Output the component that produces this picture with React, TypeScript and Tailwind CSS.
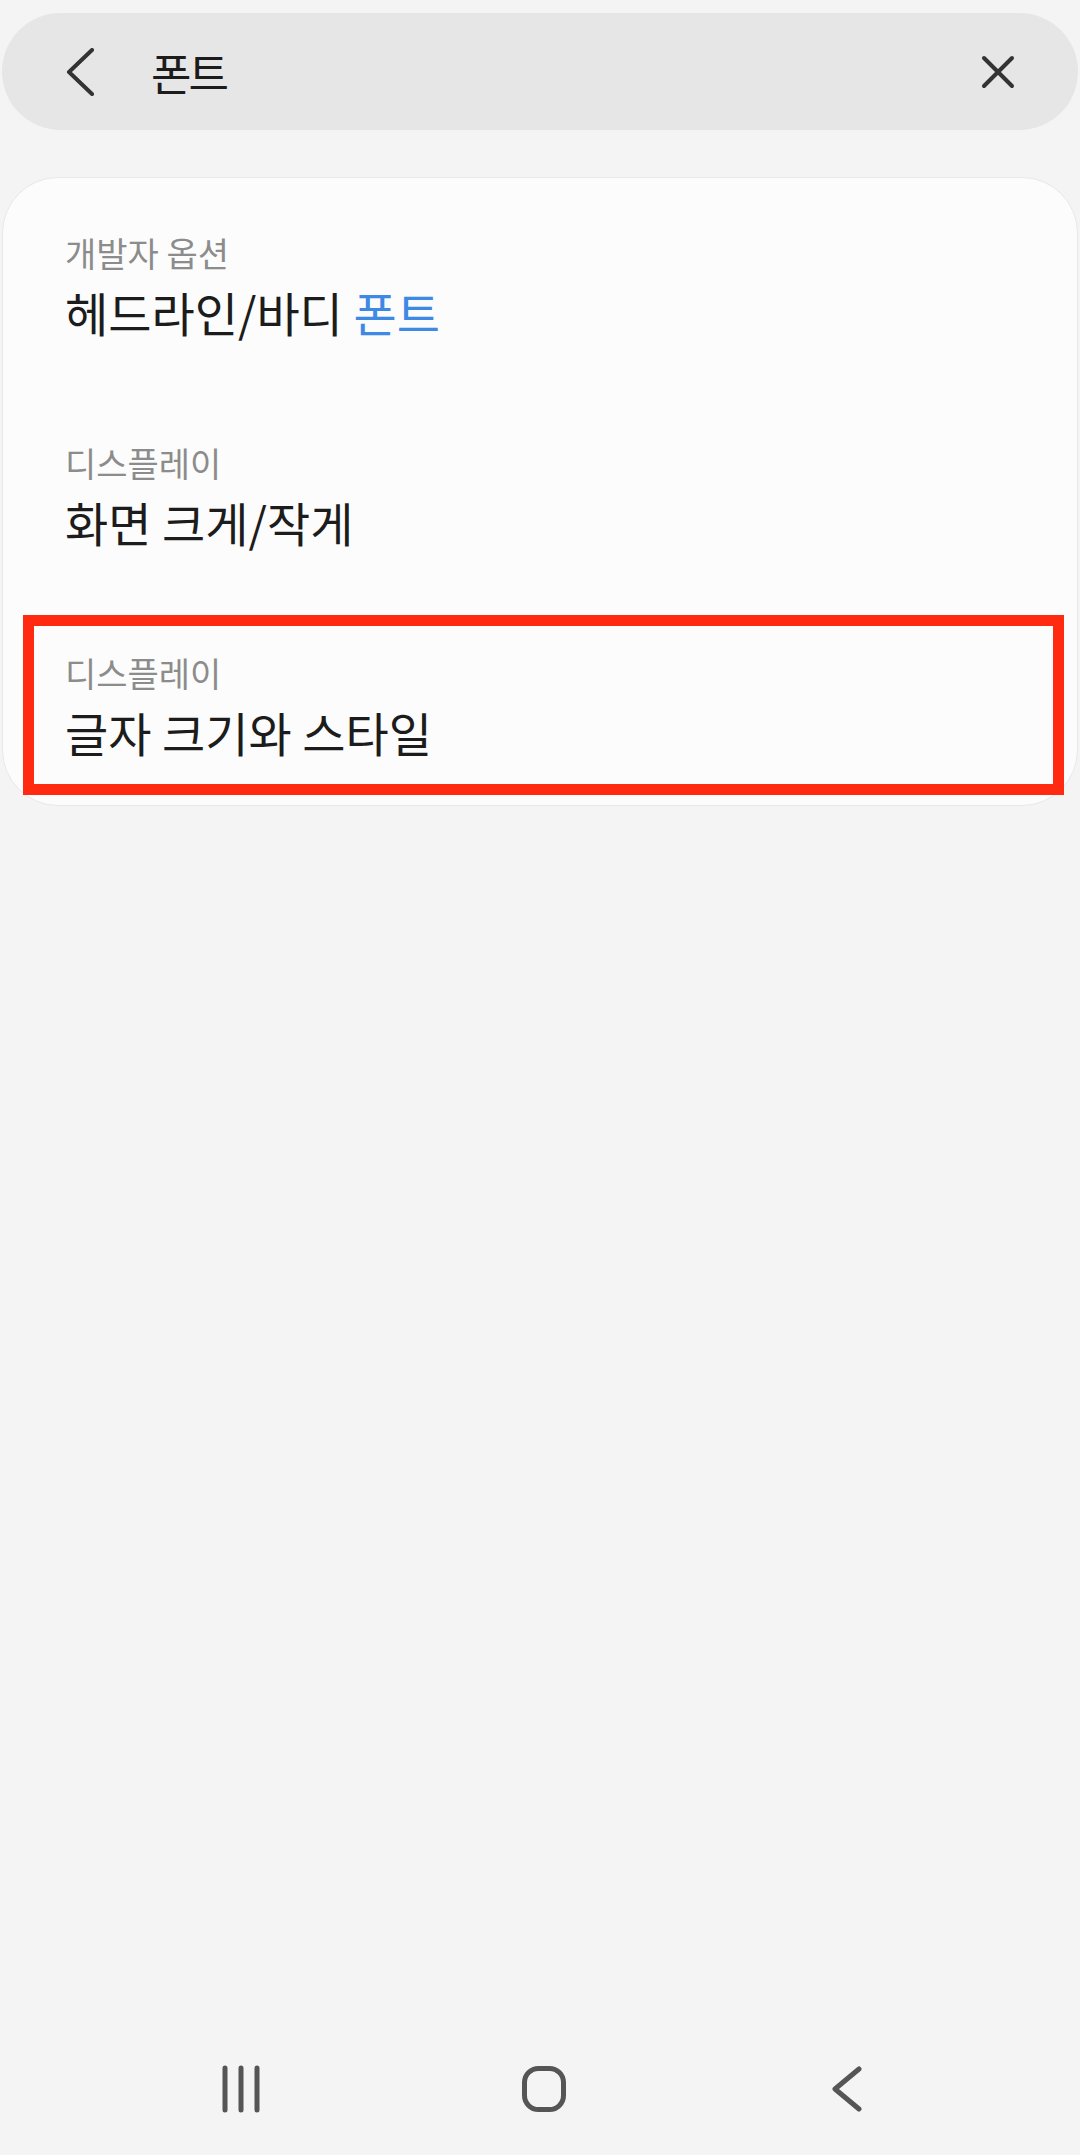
import React from "react";

const font = { fontFamily: '"Noto Sans CJK KR", "Noto Sans", sans-serif' };

function Item({ sub, children }: { sub: string; children: React.ReactNode }) {
  return (
    <div className="flex flex-col gap-[11px] pl-[62px]">
      <div className="text-[34px] leading-[40px] tracking-[0px] text-[#8c8c8c]">{sub}</div>
      <div className="text-[47px] leading-[56px] tracking-[0px] text-[#1c1c1c]">{children}</div>
    </div>
  );
}

export default function App() {
  return (
    <div className="relative w-[1080px] min-h-[2155px] bg-[#f4f4f4] flex flex-col" style={font}>
      {/* Header pill */}
      <div className="pt-[13px] px-[2px]">
        <div className="h-[117px] rounded-full bg-[#e6e6e6] flex items-center pl-[63px] pr-[63px]">
          <svg width="30" height="48" viewBox="0 0 30 48" fill="none" className="shrink-0">
            <polyline points="27,2 4,24 27,46" stroke="#333" strokeWidth="4" strokeLinecap="round" strokeLinejoin="round" />
          </svg>
          <div className="ml-[56px] text-[44px] leading-[56px] tracking-[-3px] text-[#1c1c1c]">폰트</div>
          <div className="flex-1" />
          <svg width="34" height="34" viewBox="0 0 34 34" fill="none" className="shrink-0">
            <line x1="3" y1="3" x2="31" y2="31" stroke="#333" strokeWidth="4" strokeLinecap="round" />
            <line x1="31" y1="3" x2="3" y2="31" stroke="#333" strokeWidth="4" strokeLinecap="round" />
          </svg>
        </div>
      </div>

      {/* Card */}
      <div className="mt-[47px] mx-[2px] rounded-[56px] bg-[#fcfcfc] border border-[#e8e8e8] pt-[55px] pb-[45px] flex flex-col gap-[103px]">
        <Item sub="개발자 옵션">
          헤드라인/바디 <span className="text-[#3d89e4]">폰트</span>
        </Item>
        <Item sub="디스플레이">화면 크게/작게</Item>
        <Item sub="디스플레이">글자 크기와 스타일</Item>
      </div>

      <div className="flex-1" />

      {/* Navigation bar */}
      <div className="h-[132px] flex items-center justify-center gap-[183px] pl-[8px]">
        <div className="w-[120px] flex justify-center">
          <svg width="40" height="48" viewBox="0 0 40 48" fill="none">
            <line x1="4" y1="3" x2="4" y2="45" stroke="#555" strokeWidth="5" strokeLinecap="round" />
            <line x1="20" y1="3" x2="20" y2="45" stroke="#555" strokeWidth="5" strokeLinecap="round" />
            <line x1="36" y1="3" x2="36" y2="45" stroke="#555" strokeWidth="5" strokeLinecap="round" />
          </svg>
        </div>
        <div className="w-[120px] flex justify-center">
          <svg width="44" height="46" viewBox="0 0 44 46" fill="none">
            <rect x="2.5" y="2.5" width="39" height="41" rx="14" stroke="#555" strokeWidth="5" />
          </svg>
        </div>
        <div className="w-[120px] flex justify-center">
          <svg width="32" height="46" viewBox="0 0 32 46" fill="none">
            <polyline points="28,3 4,23 28,43" stroke="#555" strokeWidth="5" strokeLinecap="round" strokeLinejoin="round" />
          </svg>
        </div>
      </div>

      {/* Red highlight annotation */}
      <div className="absolute left-[23px] top-[615px] w-[1041px] h-[180px] border-[11px] border-[#ff2a0f]" />
    </div>
  );
}
